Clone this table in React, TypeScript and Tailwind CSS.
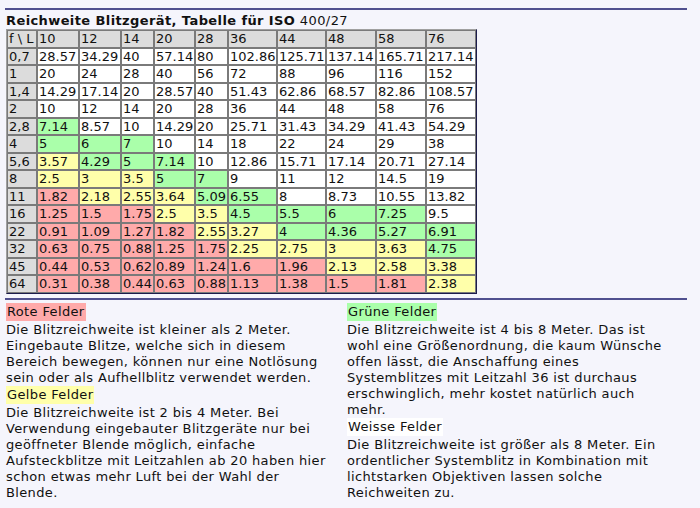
const cols = [10, 12, 14, 20, 28, 36, 44, 48, 58, 76]
const widths = [30, 42, 42, 33, 41, 33, 49, 49, 50, 50, 50]

const rows: [string, string[]][] = [
	['0,7', ['28.57', '34.29', '40', '57.14', '80', '102.86', '125.71', '137.14', '165.71', '217.14']],
	['1', ['20', '24', '28', '40', '56', '72', '88', '96', '116', '152']],
	['1,4', ['14.29', '17.14', '20', '28.57', '40', '51.43', '62.86', '68.57', '82.86', '108.57']],
	['2', ['10', '12', '14', '20', '28', '36', '44', '48', '58', '76']],
	['2,8', ['7.14', '8.57', '10', '14.29', '20', '25.71', '31.43', '34.29', '41.43', '54.29']],
	['4', ['5', '6', '7', '10', '14', '18', '22', '24', '29', '38']],
	['5,6', ['3.57', '4.29', '5', '7.14', '10', '12.86', '15.71', '17.14', '20.71', '27.14']],
	['8', ['2.5', '3', '3.5', '5', '7', '9', '11', '12', '14.5', '19']],
	['11', ['1.82', '2.18', '2.55', '3.64', '5.09', '6.55', '8', '8.73', '10.55', '13.82']],
	['16', ['1.25', '1.5', '1.75', '2.5', '3.5', '4.5', '5.5', '6', '7.25', '9.5']],
	['22', ['0.91', '1.09', '1.27', '1.82', '2.55', '3.27', '4', '4.36', '5.27', '6.91']],
	['32', ['0.63', '0.75', '0.88', '1.25', '1.75', '2.25', '2.75', '3', '3.63', '4.75']],
	['45', ['0.44', '0.53', '0.62', '0.89', '1.24', '1.6', '1.96', '2.13', '2.58', '3.38']],
	['64', ['0.31', '0.38', '0.44', '0.63', '0.88', '1.13', '1.38', '1.5', '1.81', '2.38']],
]

// rot < 2m, gelb 2-4m, grün 4-8m, weiss ab 8m
const cellBg = (v: string) => {
	const n = parseFloat(v)
	if (n < 2) return 'bg-[#ffaaaa]'
	if (n < 4) return 'bg-[#ffffaa]'
	if (n < 8) return 'bg-[#aaffaa]'
	return 'bg-white'
}

const cell = 'border border-[#7a7a7a] px-[1px] leading-[15.5px] text-left font-normal whitespace-nowrap overflow-hidden'

const Label = ({ bg, children }: { bg: string; children: React.ReactNode }) => (
	<div className="mb-[1px]">
		<span className={`inline-block ${bg} px-[1px] py-[1px] leading-[16px]`}>{children}</span>
	</div>
)

// Zeilenumbrüche wie im Original (Verdana ist breiter als DejaVu)
const Para = ({ lines }: { lines: string[] }) => (
	<p className="whitespace-nowrap">
		{lines.map((l, i) => (
			<span key={i} className="block">
				{l}
			</span>
		))}
	</p>
)

const App = () => {
	return (
		<div className="w-[700px] h-[508px] overflow-hidden bg-[#f5f5fc] px-[5px] pt-[8px] text-[13px] text-[#111] font-['DejaVu_Sans',Verdana,sans-serif]">
			<div className="w-[682px] h-[2px] bg-[#50508f]" />
			<h1 className="pl-[1px] pt-[2px] leading-[17px] text-[13px] tracking-[0.4px]">
				<b>Reichweite Blitzgerät, Tabelle für ISO</b> 400/27
			</h1>
			<table className="ml-[1px] table-fixed border-separate border-spacing-0 border border-t-[#a0a0a0] border-l-[#a0a0a0] border-r-[#1c1c4c] border-b-[#1c1c4c] w-[471px]">
				<thead>
					<tr>
						<th className={`${cell} bg-[#dcdcdc]`} style={{ width: widths[0] }}>f \ L</th>
						{cols.map((c, i) => (
							<th key={c} className={`${cell} bg-[#dcdcdc]`} style={{ width: widths[i + 1] }}>
								{c}
							</th>
						))}
					</tr>
				</thead>
				<tbody>
					{rows.map(([f, vals]) => (
						<tr key={f}>
							<td className={`${cell} bg-[#dcdcdc]`}>{f}</td>
							{vals.map((v, i) => (
								<td key={i} className={`${cell} ${cellBg(v)}`}>
									{v}
								</td>
							))}
						</tr>
					))}
				</tbody>
			</table>
			<div className="mt-[4px] w-[682px] h-[2px] bg-[#50508f]" />
			<div className="grid grid-cols-[341px_341px] pt-[3px] leading-[16px] tracking-[0.36px]">
				<div className="pl-[1px]">
					<Label bg="bg-[#ffaaaa]">Rote Felder</Label>
					<Para
						lines={[
							'Die Blitzreichweite ist kleiner als 2 Meter.',
							'Eingebaute Blitze, welche sich in diesem',
							'Bereich bewegen, können nur eine Notlösung',
							'sein oder als Aufhellblitz verwendet werden.',
						]}
					/>
					<Label bg="bg-[#ffffaa]">Gelbe Felder</Label>
					<Para
						lines={[
							'Die Blitzreichweite ist 2 bis 4 Meter. Bei',
							'Verwendung eingebauter Blitzgeräte nur bei',
							'geöffneter Blende möglich, einfache',
							'Aufsteckblitze mit Leitzahlen ab 20 haben hier',
							'schon etwas mehr Luft bei der Wahl der',
							'Blende.',
						]}
					/>
				</div>
				<div className="pl-[1px]">
					<Label bg="bg-[#aaffaa]">Grüne Felder</Label>
					<Para
						lines={[
							'Die Blitzreichweite ist 4 bis 8 Meter. Das ist',
							'wohl eine Größenordnung, die kaum Wünsche',
							'offen lässt, die Anschaffung eines',
							'Systemblitzes mit Leitzahl 36 ist durchaus',
							'erschwinglich, mehr kostet natürlich auch',
							'mehr.',
						]}
					/>
					<Label bg="bg-white">Weisse Felder</Label>
					<Para
						lines={[
							'Die Blitzreichweite ist größer als 8 Meter. Ein',
							'ordentlicher Systemblitz in Kombination mit',
							'lichtstarken Objektiven lassen solche',
							'Reichweiten zu.',
						]}
					/>
				</div>
			</div>
		</div>
	)
}

export default App
